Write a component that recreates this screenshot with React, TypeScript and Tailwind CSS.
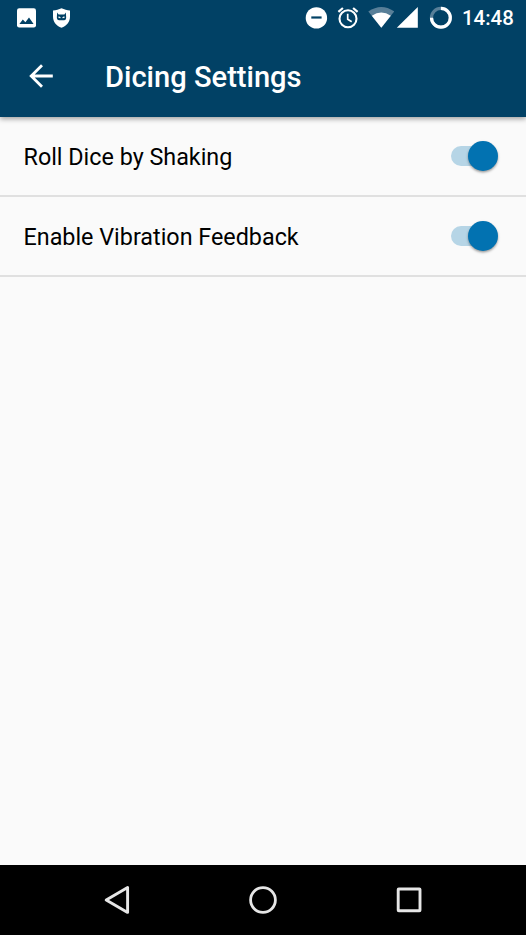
import React from 'react';

function NotificationIcons() {
  return (
    <div className="flex items-center gap-[15px]">
      <svg className="h-5 w-5" viewBox="0 0 20 20">
        <rect x="0" y="0.3" width="19" height="19.2" rx="2.2" fill="#fff" />
        <path d="M2.4 16 5.8 11.4 8.4 14.2 12 9.4 16.6 16Z" fill="#014165" />
      </svg>
      <svg className="h-5 w-5" viewBox="0 0 20 20">
        <path
          d="M9.5.2C7 1.5 4 2 1 2.6V8.5C1 13.8 4.3 18 9.5 19.8 14.7 18 18 13.8 18 8.5V2.6C15.2 2 12.2 1.5 9.5.2Z"
          fill="#fff"
        />
        <path
          d="M5.2 4.6 6.6 6.6H12.4L13.8 4.6 14.1 8.2C14.4 10.8 13.8 12.3 12 12.3H7.2C5.4 12.3 4.6 10.8 4.9 8.2Z"
          fill="#014165"
        />
        <path d="M6.8 8.8 8.4 9.6H6.8ZM12.2 8.8 10.6 9.6H12.2Z" fill="#fff" stroke="#fff" strokeWidth=".8" />
      </svg>
    </div>
  );
}

function SystemIcons() {
  return (
    <div className="flex items-center">
      <svg className="mr-2 h-6 w-6" viewBox="304 6 24 24">
        <circle cx="316.4" cy="17.9" r="10.7" fill="#fff" />
        <path d="M311.3 17.5H321.6" stroke="#014165" strokeWidth="2.2" />
      </svg>
      <svg className="mr-2 h-6 w-6" viewBox="336 6 24 24" fill="none" stroke="#fff">
        <circle cx="348" cy="18.8" r="8.5" strokeWidth="2.1" />
        <path d="M338.4 11.8 342.9 8M357.6 11.8 353.1 8" strokeWidth="2.2" />
        <path d="M347.7 13.8V19.2L351.7 21.7" strokeWidth="1.7" />
      </svg>
      <svg className="mr-0.5 h-6 w-[26px]" viewBox="368 6 26 24">
        <path d="M368.3 11.5Q381.3 2.3 394.2 11.5L381.3 27.8Z" fill="#587f98" />
        <path d="M371.8 15.7Q381.3 9.3 390.8 15.7L381.3 27.8Z" fill="#fff" />
      </svg>
      <svg className="mr-2.5 h-6 w-[23px]" viewBox="396 6 23 24">
        <path d="M396.8 27.8H417.8V7Z" fill="#fff" />
      </svg>
      <svg className="h-6 w-6" viewBox="429 6 24 24" fill="none" strokeWidth="3.2">
        <circle cx="440.9" cy="17.7" r="9.4" stroke="#587f98" />
        <path d="M440.9 8.3A9.4 9.4 0 1 1 431.5 17.7" stroke="#fff" />
      </svg>
    </div>
  );
}

function StatusBar() {
  return (
    <div className="flex h-[35px] shrink-0 items-center justify-between pl-[17px]">
      <NotificationIcons />
      <div className="flex items-center">
        <SystemIcons />
        <span className="ml-[9px] w-16 text-[20.45px] leading-6 font-medium whitespace-nowrap">14:48</span>
      </div>
    </div>
  );
}

function Switch() {
  return (
    <span className="flex h-[30px] w-[47px] items-center">
      <span className="h-5 w-[38px] rounded-full bg-[#b6d5e6]" />
      <span className="-ml-[20.75px] h-[29.5px] w-[29.5px] shrink-0 rounded-full bg-[#0272b1] shadow-[0_1.5px_2.5px_rgba(0,0,0,0.38)]" />
    </span>
  );
}

function SettingRow({ label }: { label: string }) {
  return (
    <label className="flex h-20 items-center justify-between border-b-2 border-[#e0e0e0] pr-7 pl-[23.5px]">
      <span className="pt-[2px] text-[23.33px] leading-8 text-black">{label}</span>
      <Switch />
    </label>
  );
}

function NavigationBar() {
  return (
    <nav className="flex h-[70px] shrink-0 items-center justify-center gap-[116px] bg-black">
      <svg className="h-[30px] w-[30px]" viewBox="0 0 30 30" fill="none" stroke="#e6e6e6" strokeWidth="2.9" strokeLinejoin="round">
        <path d="M4.2 15 25.6 2.6V27.4Z" />
      </svg>
      <svg className="h-[30px] w-[30px]" viewBox="0 0 30 30" fill="none" stroke="#e6e6e6" strokeWidth="2.8">
        <circle cx="15" cy="15" r="12.4" />
      </svg>
      <svg className="h-[30px] w-[30px]" viewBox="0 0 30 30" fill="none" stroke="#e6e6e6" strokeWidth="2.9" strokeLinejoin="round">
        <rect x="4.2" y="4" width="21.8" height="21.8" rx=".6" />
      </svg>
    </nav>
  );
}

export default function App() {
  return (
    <div className="flex h-[935px] w-[526px] flex-col overflow-hidden bg-[#fafafa] font-['Roboto',sans-serif]">
      <header className="z-10 shrink-0 bg-[#014165] text-white shadow-[0_2px_5px_rgba(0,0,0,0.36)]">
        <StatusBar />
        <div className="flex h-[82px] items-center pl-[29px]">
          <svg className="h-6 w-6" viewBox="0 0 24 24" fill="none" stroke="#fff" strokeWidth="2.8">
            <path d="M23.8 12H2.5M13 1.2 2.2 12 13 22.8" />
          </svg>
          <h1 className="ml-[52px] pt-[2px] text-[29.1px] leading-9 font-medium whitespace-nowrap">Dicing Settings</h1>
        </div>
      </header>
      <main className="flex-1">
        <SettingRow label="Roll Dice by Shaking" />
        <SettingRow label="Enable Vibration Feedback" />
      </main>
      <NavigationBar />
    </div>
  );
}
